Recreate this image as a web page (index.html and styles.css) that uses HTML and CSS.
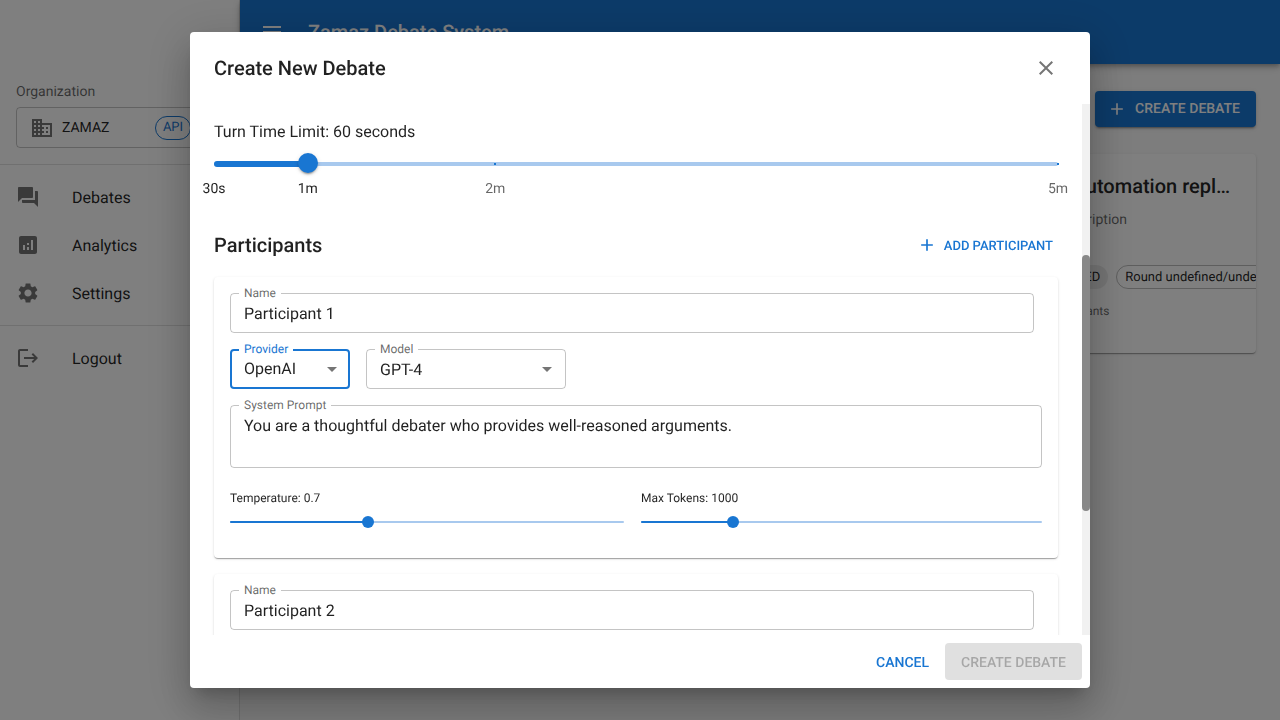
FILE: index.html
```html
<!DOCTYPE html>
<html lang="en">
<head>
<meta charset="utf-8">
<title>Zamaz Debate System</title>
<link rel="stylesheet" href="styles.css">
</head>
<body>
<div class="app">
  <aside class="sidebar">
    <div class="org">
      <div class="org-label">Organization</div>
      <div class="org-box">
        <svg class="icon org-icon" viewBox="0 0 24 24"><path d="M12 7V3H2v18h20V7H12zM6 19H4v-2h2v2zm0-4H4v-2h2v2zm0-4H4V9h2v2zm0-4H4V5h2v2zm4 12H8v-2h2v2zm0-4H8v-2h2v2zm0-4H8V9h2v2zm0-4H8V5h2v2zm10 12h-8v-2h2v-2h-2v-2h2v-2h-2V9h8v10zm-2-8h-2v2h2v-2zm0 4h-2v2h2v-2z"/></svg>
        <span class="org-name">ZAMAZ</span>
        <span class="api-chip">API</span>
      </div>
    </div>
    <div class="divider"></div>
    <nav class="nav">
      <div class="nav-item"><svg class="icon nav-icon" viewBox="0 0 24 24"><path d="M21 6h-2v9H6v2c0 .55.45 1 1 1h11l4 4V7c0-.55-.45-1-1-1zm-4 6V3c0-.55-.45-1-1-1H3c-.55 0-1 .45-1 1v14l4-4h10c.55 0 1-.45 1-1z"/></svg><span>Debates</span></div>
      <div class="nav-item"><svg class="icon nav-icon" viewBox="0 0 24 24"><path d="M19 3H5c-1.1 0-2 .9-2 2v14c0 1.1.9 2 2 2h14c1.1 0 2-.9 2-2V5c0-1.1-.9-2-2-2zM9 17H7v-5h2v5zm4 0h-2v-3h2v3zm0-5h-2v-2h2v2zm4 5h-2V7h2v10z"/></svg><span>Analytics</span></div>
      <div class="nav-item"><svg class="icon nav-icon" viewBox="0 0 24 24"><path d="M19.14 12.94c.04-.3.06-.61.06-.94 0-.32-.02-.64-.07-.94l2.03-1.58c.18-.14.23-.41.12-.61l-1.92-3.32c-.12-.22-.37-.29-.59-.22l-2.39.96c-.5-.38-1.03-.7-1.62-.94l-.36-2.54c-.04-.24-.24-.41-.48-.41h-3.84c-.24 0-.43.17-.47.41l-.36 2.54c-.59.24-1.13.57-1.62.94l-2.39-.96c-.22-.08-.47 0-.59.22L2.74 8.87c-.12.21-.08.47.12.61l2.03 1.58c-.05.3-.09.63-.09.94s.02.64.07.94l-2.03 1.58c-.18.14-.23.41-.12.61l1.92 3.32c.12.22.37.29.59.22l2.39-.96c.5.38 1.03.7 1.62.94l.36 2.54c.05.24.24.41.48.41h3.84c.24 0 .44-.17.47-.41l.36-2.54c.59-.24 1.13-.56 1.62-.94l2.39.96c.22.08.47 0 .59-.22l1.92-3.32c.12-.22.07-.47-.12-.61l-2.01-1.58zM12 15.6c-1.98 0-3.6-1.62-3.6-3.6s1.62-3.6 3.6-3.6 3.6 1.62 3.6 3.6-1.62 3.6-3.6 3.6z"/></svg><span>Settings</span></div>
    </nav>
    <div class="divider"></div>
    <nav class="nav">
      <div class="nav-item"><svg class="icon nav-icon" viewBox="0 0 24 24"><path d="M17 7l-1.41 1.41L18.17 11H8v2h10.17l-2.58 2.58L17 17l5-5zM4 5h8V3H4c-1.1 0-2 .9-2 2v14c0 1.1.9 2 2 2h8v-2H4V5z"/></svg><span>Logout</span></div>
    </nav>
  </aside>
  <div class="main">
    <header class="appbar">
      <svg class="icon menu-icon" viewBox="0 0 24 24"><path d="M3 18h18v-2H3v2zm0-5h18v-2H3v2zm0-7v2h18V6H3z"/></svg>
      <span class="app-title">Zamaz Debate System</span>
    </header>
    <div class="page">
      <div class="page-head">
        <h1 class="page-title">Debates</h1>
        <div class="btn-contained"><svg class="icon btn-icon" viewBox="0 0 24 24"><path d="M19 13h-6v6h-2v-6H5v-2h6V5h2v6h6v2z"/></svg>Create Debate</div>
      </div>
      <div class="cards">
        <article class="card">
          <div class="card-title">API Automation replacing jobs</div>
          <div class="card-desc">No description</div>
          <div class="chips"><span class="chip chip-filled">CREATED</span><span class="chip chip-outlined">Round undefined/undefined</span></div>
          <div class="card-meta">0 participants</div>
        </article>
      </div>
    </div>
  </div>
</div>

<div class="backdrop">
  <div class="dialog">
    <div class="dialog-title">
      <h2 class="dialog-heading">Create New Debate</h2>
      <svg class="icon close-icon" viewBox="0 0 24 24"><path d="M19 6.41 17.59 5 12 10.59 6.41 5 5 6.41 10.59 12 5 17.59 6.41 19 12 13.41 17.59 19 19 17.59 13.41 12z"/></svg>
    </div>
    <div class="dialog-body">
      <div class="dialog-scroll">
        <div class="turn-label">Turn Time Limit: 60 seconds</div>
        <div class="slider slider-lg">
          <div class="rail"></div>
          <div class="track track-turn"></div>
          <span class="mark mark-2m"></span>
          <span class="mark mark-5m"></span>
          <span class="thumb thumb-turn"></span>
        </div>
        <div class="mark-labels">
          <span class="mark-label on mark-start">30s</span>
          <span class="mark-label on mark-1m">1m</span>
          <span class="mark-label mark-2m">2m</span>
          <span class="mark-label mark-5m">5m</span>
        </div>
        <div class="participants-head">
          <h3 class="section-title">Participants</h3>
          <div class="btn-text"><svg class="icon btn-icon" viewBox="0 0 24 24"><path d="M19 13h-6v6h-2v-6H5v-2h6V5h2v6h6v2z"/></svg>Add Participant</div>
        </div>
        <section class="p-card p-card-first">
          <div class="field field-name"><span class="field-label">Name</span><span class="field-value">Participant 1</span></div>
          <div class="select-row">
            <div class="field field-provider focused"><span class="field-label">Provider</span><span class="field-value">OpenAI</span><svg class="icon arrow" viewBox="0 0 24 24"><path d="M7 10l5 5 5-5z"/></svg></div>
            <div class="field field-model"><span class="field-label">Model</span><span class="field-value">GPT-4</span><svg class="icon arrow" viewBox="0 0 24 24"><path d="M7 10l5 5 5-5z"/></svg></div>
          </div>
          <div class="field field-prompt"><span class="field-label">System Prompt</span><span class="field-value">You are a thoughtful debater who provides well-reasoned arguments.</span></div>
          <div class="mini-sliders">
            <div class="mini mini-temp">
              <div class="mini-label">Temperature: 0.7</div>
              <div class="slider slider-sm"><div class="rail"></div><div class="track track-temp"></div><span class="thumb thumb-temp"></span></div>
            </div>
            <div class="mini mini-tokens">
              <div class="mini-label">Max Tokens: 1000</div>
              <div class="slider slider-sm"><div class="rail"></div><div class="track track-tokens"></div><span class="thumb thumb-tokens"></span></div>
            </div>
          </div>
        </section>
        <section class="p-card">
          <div class="field field-name"><span class="field-label">Name</span><span class="field-value">Participant 2</span></div>
        </section>
      </div>
      <div class="scrollbar"><div class="scroll-thumb"></div></div>
    </div>
    <div class="dialog-actions">
      <div class="btn-cancel">Cancel</div>
      <div class="btn-disabled">Create Debate</div>
    </div>
  </div>
</div>
</body>
</html>
```
FILE: styles.css
```css
* { box-sizing: border-box; }
html, body { margin: 0; height: 100%; overflow: hidden; }
body { font-family: Roboto, "Liberation Sans", sans-serif; color: rgba(0,0,0,.87); background: #fafafa; font-size: 16px; text-rendering: geometricPrecision; }
h1, h2, h3 { margin: 0; }
.icon { display: block; width: 24px; height: 24px; fill: currentColor; flex: none; }

.app { display: flex; height: 100vh; }
.sidebar { width: 240px; flex: none; background: #fff; border-right: 1px solid rgba(0,0,0,.12); padding-top: 64px; }
.org { padding: 18px 16px 16px; }
.org-label { font-size: 14px; line-height: 21px; color: rgba(0,0,0,.6); margin-bottom: 4px; }
.org-box { width: 208px; height: 41px; border: 1px solid rgba(0,0,0,.23); border-radius: 4px; display: flex; align-items: center; padding: 0 8px 0 13px; }
.org-icon { color: rgba(0,0,0,.54); margin-right: 8px; }
.org-name { font-size: 14px; flex: 1; }
.api-chip { height: 24px; width: 36px; margin-right: 24px; border: 1px solid #1976d2; color: #1976d2; border-radius: 12px; font-size: 13px; display: flex; align-items: center; justify-content: center; }
.divider { height: 1px; background: rgba(0,0,0,.12); }
.nav { padding: 8px 0; }
.nav-item { height: 48px; display: flex; align-items: center; padding: 0 16px; font-size: 16px; }
.nav-icon { color: rgba(0,0,0,.54); margin-right: 32px; }

.main { flex: 1; min-width: 0; display: flex; flex-direction: column; }
.appbar { height: 64px; flex: none; background: #1976d2; color: #fff; display: flex; align-items: center; padding: 0 24px 0 20px; box-shadow: 0 2px 4px -1px rgba(0,0,0,.2), 0 4px 5px rgba(0,0,0,.14), 0 1px 10px rgba(0,0,0,.12); }
.menu-icon { margin-right: 24px; }
.app-title { font-size: 20px; font-weight: 500; }
.page { padding: 24px 24px 24px 16px; }
.page-head { display: flex; align-items: center; justify-content: space-between; height: 42px; margin-bottom: 24px; }
.page-title { font-size: 34px; font-weight: 400; }
.btn-contained { display: flex; align-items: center; height: 36.5px; padding: 0 16px 0 12px; background: #1976d2; color: #fff; border-radius: 4px; font-size: 14px; font-weight: 500; text-transform: uppercase; box-shadow: 0 3px 1px -2px rgba(0,0,0,.2), 0 2px 2px rgba(0,0,0,.14), 0 1px 5px rgba(0,0,0,.12); }
.btn-icon { width: 20px; height: 20px; margin-right: 8px; }
.cards { display: grid; grid-template-columns: 236px; justify-content: end; }
.card { height: 199px; padding: 16px; background: #fff; border-radius: 4px; overflow: hidden; box-shadow: 0 2px 1px -1px rgba(0,0,0,.2), 0 1px 1px rgba(0,0,0,.14), 0 1px 3px rgba(0,0,0,.12); }
.card-title { font-size: 20px; font-weight: 500; line-height: 32px; white-space: nowrap; overflow: hidden; text-overflow: ellipsis; margin-bottom: 8px; }
.card-desc { font-size: 14px; line-height: 20px; color: rgba(0,0,0,.6); margin-bottom: 35px; }
.chips { display: flex; gap: 8px; margin-bottom: 12px; width: max-content; }
.chip { height: 24px; border-radius: 12px; padding: 0 8px; font-size: 13px; display: flex; align-items: center; white-space: nowrap; }
.chip-filled { background: rgba(0,0,0,.08); padding-left: 9px; }
.chip-outlined { border: 1px solid rgba(0,0,0,.26); }
.card-meta { font-size: 12px; line-height: 20px; color: rgba(0,0,0,.6); }

.backdrop { position: fixed; inset: 0; background: rgba(0,0,0,.5); display: flex; align-items: center; justify-content: center; }
.dialog { width: 900px; height: 656px; background: #fff; border-radius: 4px; display: flex; flex-direction: column; box-shadow: 0 11px 15px -7px rgba(0,0,0,.2), 0 24px 38px 3px rgba(0,0,0,.14), 0 9px 46px 8px rgba(0,0,0,.12); }
.dialog-title { height: 72px; flex: none; display: flex; align-items: center; justify-content: space-between; padding: 0 32px 0 24px; }
.dialog-heading { font-size: 20px; font-weight: 500; line-height: 32px; }
.close-icon { color: rgba(0,0,0,.54); }
.dialog-body { flex: 1; min-height: 0; display: flex; }
.dialog-scroll { flex: 1; min-width: 0; overflow: hidden; padding: 16px 24px 0; }
.scrollbar { width: 8px; flex: none; background: #f1f1f1; }
.scroll-thumb { height: 256px; margin-top: 151px; background: #888; border-radius: 4px; }

.turn-label { font-size: 16px; line-height: 24px; }
.slider { position: relative; }
.slider-lg { height: 4px; margin-top: 17.5px; }
.rail, .track { position: absolute; top: 0; bottom: 0; left: 0; border-radius: 4px; background: #1976d2; }
.rail { right: 0; background: #a8c9ee; }
.slider-lg .track { top: -1px; bottom: -1px; }
.track-turn { width: 11.11%; }
.track-temp { width: 35%; }
.track-tokens { width: 23%; }
.thumb { position: absolute; border-radius: 50%; background: #1976d2; transform: translate(-50%, -50%); top: 50%; }
.thumb-turn { left: 11.11%; width: 20px; height: 20px; margin-top: -.5px; box-shadow: 0 3px 1px -2px rgba(0,0,0,.2), 0 2px 2px rgba(0,0,0,.14), 0 1px 5px rgba(0,0,0,.12); }
.thumb-temp { left: 35%; width: 12px; height: 12px; }
.thumb-tokens { left: 23%; width: 12px; height: 12px; }
.mark { position: absolute; top: 1px; width: 2px; height: 2px; background: #1976d2; transform: translateX(-50%); }
.mark-start { left: 0; }
.mark-1m { left: 11.11%; }
.mark-2m { left: 33.33%; }
.mark-5m { left: 100%; }
.mark-labels { position: relative; height: 20px; margin-top: 13px; }
.mark-label { position: absolute; top: 0; transform: translateX(-50%); font-size: 14px; line-height: 20px; color: rgba(0,0,0,.6); }
.mark-label.on { color: rgba(0,0,0,.87); }
.participants-head { display: flex; align-items: center; justify-content: space-between; height: 37px; margin-top: 27.5px; margin-bottom: 14px; }
.section-title { font-size: 20px; font-weight: 500; }
.btn-text { display: flex; align-items: center; height: 36.5px; padding: 4px 5px 0 3px; color: #1976d2; font-size: 13px; font-weight: 500; text-transform: uppercase; }
.btn-text .btn-icon { margin: -4px 7px 0 0; }

.p-card { background: #fff; border-radius: 4px; padding: 16px; box-shadow: 0 2px 1px -1px rgba(0,0,0,.2), 0 1px 1px rgba(0,0,0,.14), 0 1px 3px rgba(0,0,0,.12); }
.p-card-first { height: 281px; margin-bottom: 16px; }
.field { position: relative; display: flex; align-items: center; height: 40px; padding: 0 13px; border: 1px solid rgba(0,0,0,.23); border-radius: 4px; }
.field.focused { border: 2px solid #1976d2; padding: 0 12px; }
.field-label { position: absolute; top: -8px; left: 8px; padding: 0 5px; background: #fff; font-size: 12px; line-height: 14px; color: rgba(0,0,0,.6); }
.focused .field-label { left: 7px; top: -9px; color: #1976d2; }
.field-value { font-size: 16px; line-height: 24px; flex: 1; white-space: nowrap; }
.field-name .field-value, .field-model .field-value { padding-top: 1px; }
.arrow { position: absolute; right: 6px; top: 7px; color: rgba(0,0,0,.54); }
.focused .arrow { right: 4px; top: 6px; }
.field-name { width: 804px; }
.select-row { display: flex; gap: 16px; margin-top: 16px; }
.field-provider { width: 120px; }
.field-model { width: 200px; }
.field-prompt { height: 63px; margin-top: 16px; align-items: flex-start; padding-top: 8px; }
.mini-sliders { display: flex; gap: 17px; margin-top: 22px; }
.mini-temp { width: 394px; }
.mini-tokens { width: 401px; }
.mini-label { font-size: 12px; line-height: 16px; }
.slider-sm { height: 2px; margin-top: 15px; }
.dialog-actions { height: 53px; flex: none; display: flex; align-items: center; justify-content: flex-end; gap: 8px; padding: 0 8px; }
.btn-cancel, .btn-disabled { display: flex; align-items: center; height: 36.5px; padding-top: 2px; border-radius: 4px; font-size: 14px; font-weight: 500; text-transform: uppercase; }
.btn-cancel { padding-left: 8px; padding-right: 8px; color: #1976d2; }
.btn-disabled { padding-left: 16px; padding-right: 16px; background: #e0e0e0; color: rgba(0,0,0,.26); }
```
